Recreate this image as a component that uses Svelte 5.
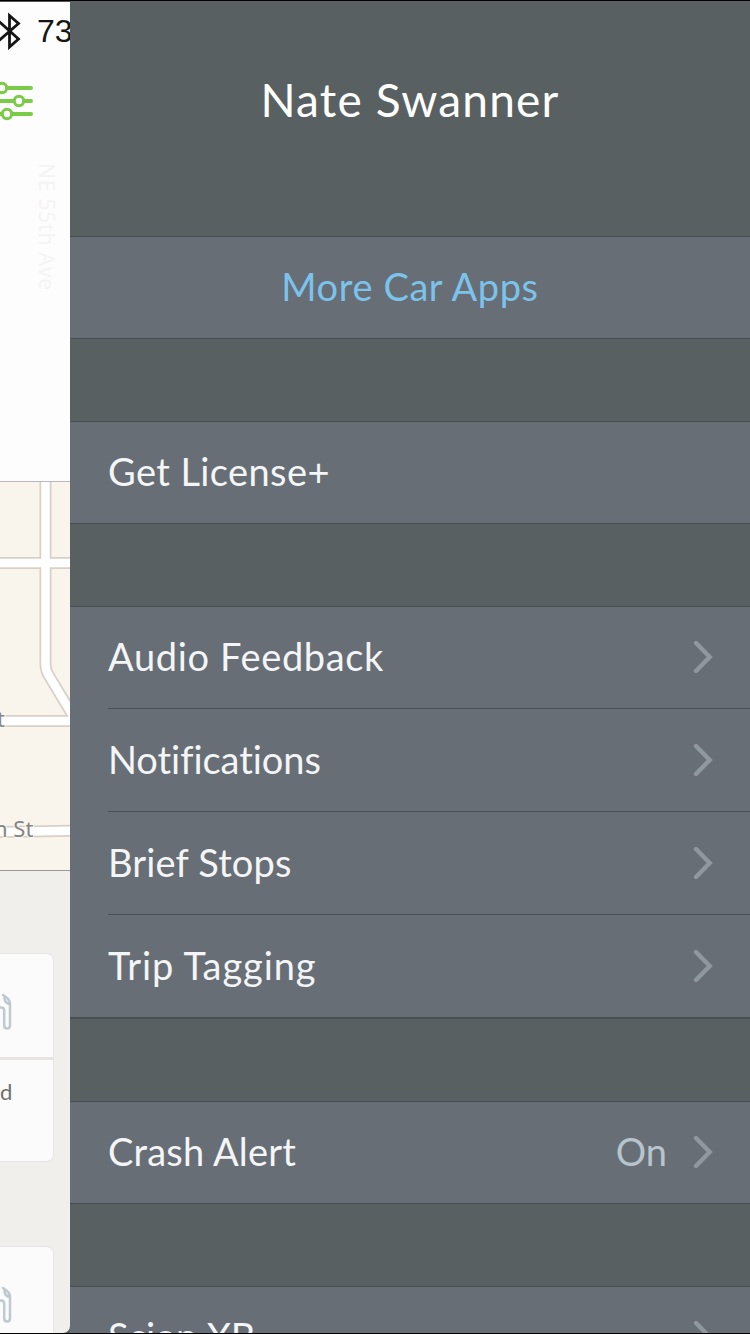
<script>
    const title = 'Nate Swanner';

    // spacing is the tracking of each label, in px
    const groups = [
        [{ label: 'More Car Apps', spacing: 0.6, link: true }],
        [{ label: 'Get License+', spacing: 0.4 }],
        [
            { label: 'Audio Feedback', spacing: 0.65, arrow: true },
            { label: 'Notifications', spacing: -0.05, arrow: true },
            { label: 'Brief Stops', spacing: 0.15, arrow: true },
            { label: 'Trip Tagging', spacing: 0.9, arrow: true }
        ],
        [{ label: 'Crash Alert', spacing: 0.2, value: 'On', arrow: true }],
        [{ label: 'Scion XB', spacing: -0.3, arrow: true }]
    ];
</script>

{#snippet pump()}
    <svg class="pump" width="14" height="38" viewBox="0 0 14 38" fill="none">
        <path d="M0 14.5h1q3.200 0 3.200 3V32.500q0 3 2.900 3T10 32.500V10.500q0-3-3-5.500L3 2" />
        <path d="M4.500 4q-.5 5.500 5 7" />
    </svg>
{/snippet}

<div class="screen">
    <div class="behind">
        <header class="top">
            <div class="status">
                <svg width="22" height="38" viewBox="0 0 22 38" fill="none">
                    <path d="M-1 9.500L18.500 27 9.500 35V3.500L18.500 11.500L-1 28.500" stroke="#151515" stroke-width="2.800" />
                </svg>
                <span>73</span>
            </div>
            <svg class="filters" width="36" height="44" viewBox="0 0 36 44">
                <path d="M0 8h31M0 21h31M0 34h31" />
                <circle cx="2" cy="8" r="4.700" />
                <circle cx="19" cy="21" r="4.700" />
                <circle cx="7" cy="34" r="4.700" />
            </svg>
            <span class="street">NE 55th Ave</span>
        </header>

        <svg class="map" width="70" height="388" viewBox="0 482 70 388">
            <rect y="482" width="70" height="388" fill="#f9f4ec" />
            <g class="edge">
                <path d="M45.500 480V664q0 6 3 11L78 724" />
                <path d="M-4 563H80" />
                <path d="M-4 721H80" />
                <path d="M-4 832L80 830.500" />
            </g>
            <g class="road">
                <path d="M45.500 480V664q0 6 3 11L78 724" />
                <path d="M-4 563H80" />
                <path d="M-4 721H80" />
                <path d="M-4 832L80 830.500" />
            </g>
            <text x="-3" y="727">t</text>
            <text x="-6" y="837">n St</text>
        </svg>

        <div class="cards">
            <div class="card">
                <div class="fuel">{@render pump()}</div>
                <div class="word">d</div>
            </div>
            <div class="card">
                <div class="fuel">{@render pump()}</div>
                <div class="word"></div>
            </div>
        </div>
    </div>

    <aside class="menu">
        <h1>{title}</h1>
        {#each groups as group}
            <ul class:multi={group.length > 1}>
                {#each group as item}
                    <li class:link={item.link}>
                        <span class="label" style="letter-spacing: {item.spacing}px">{item.label}</span>
                        {#if item.value}
                            <span class="value">{item.value}</span>
                        {/if}
                        {#if item.arrow}
                            <svg width="20" height="34" viewBox="0 0 20 34">
                                <path d="M3 3L16.700 17L3 31" />
                            </svg>
                        {/if}
                    </li>
                {/each}
            </ul>
        {/each}
    </aside>
</div>

<style>
    :global(body) {
        margin: 0;
        background: #000;
    }

    .screen {
        box-sizing: border-box;
        display: flex;
        width: 750px;
        height: 1334px;
        overflow: hidden;
        background: #596062;
        border-top: 1px solid #000;
        border-bottom: 1px solid #000;
        font-family: Lato, sans-serif;
        font-variant-ligatures: none;
    }

    /* Main screen, pushed to the left */
    .behind {
        display: flex;
        flex-direction: column;
        flex: none;
        width: 70px;
        overflow: hidden;
        background: #f0efeb;
        border-bottom-right-radius: 7px;
    }

    .top {
        position: relative;
        box-sizing: border-box;
        flex: none;
        height: 481px;
        padding-top: 10px;
        background: #fefdfd;
        border-top: 1px solid #555;
        border-bottom: 1px solid #b9b9bd;
    }

    .status {
        display: flex;
        height: 38px;
        font: 32px/39px "Liberation Sans", sans-serif;
        color: #151515;
    }

    .status svg {
        flex: none;
    }

    .status span {
        margin-left: 15px;
    }

    .filters {
        display: block;
        margin-top: 30px;
    }

    .filters path {
        stroke: #7acb45;
        stroke-width: 4;
        stroke-linecap: round;
    }

    .filters circle {
        fill: #fff;
        stroke: #7acb45;
        stroke-width: 3;
    }

    .street {
        position: absolute;
        top: 161px;
        left: 36px;
        font: 21px/21px "Noto Sans", sans-serif;
        letter-spacing: 0.8px;
        color: #f5f4f4;
        writing-mode: vertical-rl;
        white-space: nowrap;
    }

    .map {
        display: block;
        flex: none;
        border-bottom: 1px solid #98989c;
    }

    .edge path {
        fill: none;
        stroke: #d8d0c6;
        stroke-width: 12;
    }

    .road path {
        fill: none;
        stroke: #fff;
        stroke-width: 8.5;
    }

    .map text {
        font: 22px "Noto Sans", sans-serif;
        fill: #858585;
        stroke: #fbf8f3;
        stroke-width: 2;
        paint-order: stroke;
    }

    .cards {
        display: flex;
        flex-direction: column;
        gap: 84px;
        padding-top: 82px;
    }

    .card {
        box-sizing: border-box;
        width: 54px;
        height: 209px;
        background: #fbfbfb;
        border: 1px solid #e6e6e4;
        border-left: 0;
        border-radius: 0 7px 7px 0;
    }

    .fuel {
        box-sizing: border-box;
        height: 106px;
        padding-top: 39px;
        border-bottom: 3px solid #e5e4e0;
    }

    .pump {
        display: block;
        stroke: #bec9d0;
        stroke-width: 2.5;
        stroke-linecap: round;
    }

    .word {
        padding-top: 17px;
        font-size: 22px;
        line-height: 30px;
        color: #6e6e6e;
    }

    /* Settings menu */
    .menu {
        flex: 1;
        overflow: hidden;
    }

    h1 {
        box-sizing: border-box;
        height: 235px;
        margin: 0;
        padding-top: 71px;
        font-size: 46px;
        font-weight: 400;
        line-height: 56px;
        letter-spacing: 1.2px;
        text-align: center;
        color: #fff;
    }

    ul {
        margin: 0 0 82px;
        padding: 0;
        list-style: none;
        background: #676e75;
        border-top: 1px solid #484f53;
        border-bottom: 1px solid #484f53;
    }

    ul.multi {
        border-bottom-width: 2px;
    }

    li {
        display: flex;
        align-items: center;
        height: 101px;
        margin-left: 38px;
        padding-right: 37px;
        font-size: 38px;
        color: #f4f5f6;
    }

    li + li {
        height: 102px;
        border-top: 1px solid #484f53;
    }

    .label {
        flex: 1;
        padding-bottom: 4px;
    }

    li + li .label {
        padding-bottom: 2px;
    }

    .link {
        margin-left: 0;
        padding-right: 0;
        text-align: center;
        color: #7cc3ec;
    }

    .value {
        margin-right: 26px;
        padding-bottom: 4px;
        color: #b8c4cd;
    }

    li svg {
        margin-bottom: 2px;
    }

    li + li svg {
        margin-bottom: 0;
    }

    li path {
        fill: none;
        stroke: #8f989f;
        stroke-width: 4.4;
        stroke-linecap: round;
    }
</style>
